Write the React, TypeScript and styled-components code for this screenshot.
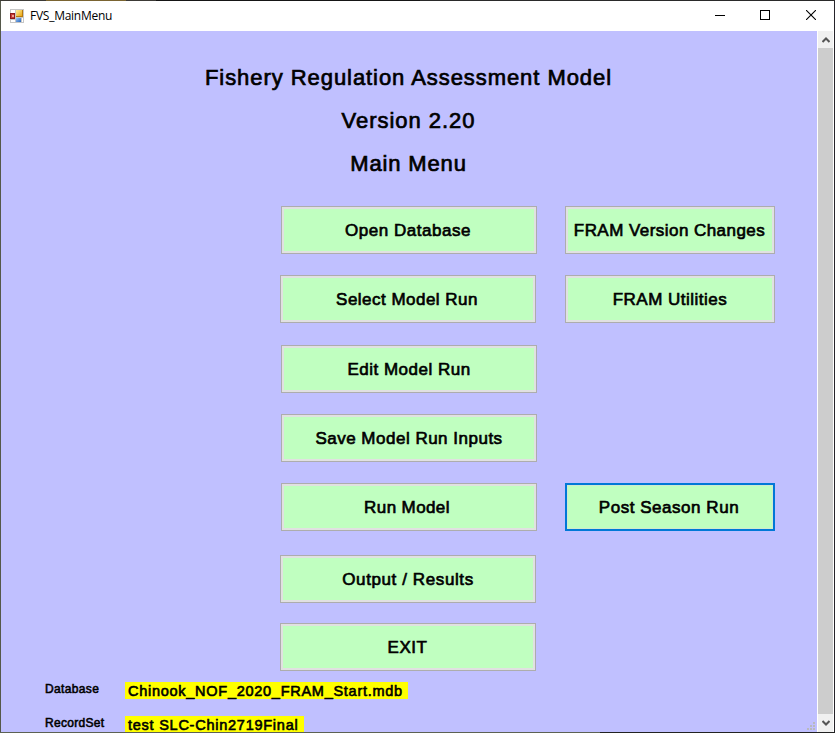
import React from 'react';
import styled, { createGlobalStyle } from 'styled-components';

const GlobalStyle = createGlobalStyle`
  * { box-sizing: border-box; }
  html, body { margin: 0; padding: 0; overflow: hidden; }
`;

const Frame = styled.div`
  width: 835px;
  height: 733px;
  padding: 1px;
  background:
    linear-gradient(90deg, #3c3a36 0 46px, #7a6431 46px 126px, #3c3a36 126px 156px, #151515 156px 420px, #2a2a2a 420px) top / 100% 1px no-repeat,
    linear-gradient(90deg, #5c6154 0 600px, #222 600px) bottom / 100% 1px no-repeat,
    linear-gradient(#55584a, #55584a) left / 1px 100% no-repeat,
    #25232a;
  display: flex;
  flex-direction: column;
  overflow: hidden;
  color: #000;
`;

const TitleBar = styled.header`
  height: 30px;
  flex: none;
  background: #fff;
  display: flex;
  align-items: center;
  padding-left: 9px;
`;

const Caption = styled.span`
  flex: 1;
  margin-left: 6px;
  font: 12px/16px 'Open Sans', 'Noto Sans', sans-serif;
  letter-spacing: -0.26px;
`;

const WindowButton = styled.button`
  width: 46px;
  height: 30px;
  border: 0;
  padding: 0 0 2px;
  background: none;
  display: grid;
  place-items: center;
`;

const MinimizeButton = styled(WindowButton)`
  padding-left: 2px;
`;

const Content = styled.div`
  flex: 1;
  min-height: 0;
  display: flex;
`;

const Form = styled.main`
  position: relative;
  width: 816px;
  background: #c0c0ff;
  font-family: 'Liberation Sans', Arial, sans-serif;
  overflow: hidden;
`;

const Heading = styled.h1<{ $spacing: number }>`
  margin: 0;
  height: 43px;
  padding-right: 1px;
  font-size: 22px;
  line-height: 43px;
  font-weight: 400;
  text-align: center;
  white-space: nowrap;
  -webkit-text-stroke: 0.7px #000;
  letter-spacing: ${p => p.$spacing}px;
`;

const Headings = styled.div`
  padding-top: 25px;
  height: 175px;
`;

const Menu = styled.div`
  display: flex;
  gap: 28px;
  padding-left: 279px;
  height: 465px;
`;

const Column = styled.div<{ $width: number }>`
  width: ${p => p.$width}px;
  display: flex;
  flex-direction: column;
`;

const MenuButton = styled.button<{ $gap: number; $indent?: number; $width: number; $spacing: number; $inset?: number; $focused?: boolean }>`
  flex: none;
  width: ${p => p.$width}px;
  height: 48px;
  margin: ${p => p.$gap}px 0 0 ${p => p.$indent ?? 0}px;
  padding: 2px ${p => p.$inset ?? 0}px 0 0;
  border: ${p => (p.$focused ? '2px solid #0078d7' : '1px solid #adadad')};
  background: #c0ffc0;
  box-shadow: inset 0 0 0 ${p => (p.$focused ? 1 : 2)}px ${p => (p.$focused ? '#d0ead0' : '#e1e1e1')};
  color: #000;
  font: 400 17px/20px 'Liberation Sans', Arial, sans-serif;
  letter-spacing: ${p => p.$spacing}px;
  -webkit-text-stroke: 0.65px #000;
  white-space: nowrap;
`;

const InfoRow = styled.div<{ $gap: number }>`
  display: flex;
  height: 18px;
  margin-top: ${p => p.$gap}px;
  padding-left: 44px;
`;

const InfoLabel = styled.span<{ $spacing: number }>`
  width: 80px;
  font-size: 12px;
  line-height: 14px;
  letter-spacing: ${p => p.$spacing}px;
  -webkit-text-stroke: 0.55px #000;
`;

const InfoValue = styled.span<{ $width: number; $spacing: number }>`
  width: ${p => p.$width}px;
  height: 17px;
  padding-left: 3px;
  background: #ff0;
  font-size: 14.5px;
  line-height: 19px;
  letter-spacing: ${p => p.$spacing}px;
  -webkit-text-stroke: 0.6px #000;
  white-space: nowrap;
`;

const Grip = styled.svg`
  position: absolute;
  right: 2px;
  bottom: 2px;
`;

const ScrollBar = styled.div`
  width: 17px;
  background: #f0f0f0;
  border-left: 1px solid #fff;
  border-right: 1px solid #fff;
  display: flex;
  flex-direction: column;
`;

const Arrow = styled.div`
  height: 17px;
  display: grid;
  place-items: center;
`;

const Thumb = styled.div`
  height: 666px;
  background: #cdcdcd;
`;

const AppIcon = () => (
  <svg width="14" height="14" viewBox="0 0 14 14" shapeRendering="crispEdges">
    <defs>
      <linearGradient id="gold" x2="1" y2="1"><stop stopColor="#fff0a0" /><stop offset="1" stopColor="#e9a512" /></linearGradient>
      <linearGradient id="blue" x2="1" y2="1"><stop stopColor="#9cc5f5" /><stop offset="1" stopColor="#2564bd" /></linearGradient>
    </defs>
    <path d="M0 0H14V14H0Z" fill="#c6c6c6" />
    <path d="M1 1H5V4H1ZM1 11H5V13H1ZM12 9H13V13H12Z" fill="#fff" />
    <path d="M0 4H5V10H0Z" fill="#8d1919" />
    <path d="M1 5H4V9H1Z" fill="#c63a36" />
    <path d="M2 6H4V8H2Z" fill="#f0a090" />
    <path d="M6 1H13V8H6Z" fill="#b87a0b" />
    <path d="M6 1H12V7H6Z" fill="url(#gold)" />
    <path d="M6 9H11V13H6Z" fill="url(#blue)" />
  </svg>
);

const left = [
  { text: 'Open Database', gap: 0, indent: 1, spacing: 0.55, inset: 2 },
  { text: 'Select Model Run', gap: 21, indent: 0, spacing: 0.48, inset: 2 },
  { text: 'Edit Model Run', gap: 22, indent: 1, spacing: 0.5 },
  { text: 'Save Model Run Inputs', gap: 21, indent: 1, spacing: 0.5 },
  { text: 'Run Model', gap: 21, indent: 1, spacing: 0.4, inset: 4 },
  { text: 'Output / Results', gap: 24, indent: 0, spacing: 0.6 },
  { text: 'EXIT', gap: 20, indent: 0, spacing: 0.5, inset: 1 },
];

const right = [
  { text: 'FRAM Version Changes', gap: 0, spacing: 0.45, inset: 1 },
  { text: 'FRAM Utilities', gap: 21, spacing: 0.5 },
  { text: 'Post Season Run', gap: 160, spacing: 0.53, inset: 2, focused: true },
];

export default function App() {
  return (
    <>
      <GlobalStyle />
      <Frame>
        <TitleBar>
          <AppIcon />
          <Caption>FVS_MainMenu</Caption>
          <MinimizeButton aria-label="Minimize">
            <svg width="10" height="10" shapeRendering="crispEdges"><path d="M0 5.5H10" stroke="#000" /></svg>
          </MinimizeButton>
          <WindowButton aria-label="Maximize">
            <svg width="10" height="10" shapeRendering="crispEdges"><path d="M.5 .5H9.5V9.5H.5Z" fill="none" stroke="#000" /></svg>
          </WindowButton>
          <WindowButton aria-label="Close">
            <svg width="10" height="10"><path d="M0 0L10 10M10 0L0 10" stroke="#000" strokeWidth="1.1" /></svg>
          </WindowButton>
        </TitleBar>
        <Content>
          <Form>
            <Headings>
              <Heading $spacing={0.94}>Fishery Regulation Assessment Model</Heading>
              <Heading $spacing={0.96}>Version 2.20</Heading>
              <Heading $spacing={0.85}>Main Menu</Heading>
            </Headings>
            <Menu>
              <Column $width={257}>
                {left.map(b => (
                  <MenuButton key={b.text} $width={256} $gap={b.gap} $indent={b.indent} $spacing={b.spacing} $inset={b.inset}>{b.text}</MenuButton>
                ))}
              </Column>
              <Column $width={210}>
                {right.map(b => (
                  <MenuButton key={b.text} $width={210} $gap={b.gap} $spacing={b.spacing} $inset={b.inset} $focused={b.focused}>{b.text}</MenuButton>
                ))}
              </Column>
            </Menu>
            <InfoRow $gap={11}>
              <InfoLabel $spacing={0.35}>Database</InfoLabel>
              <InfoValue $width={283} $spacing={0.73}>Chinook_NOF_2020_FRAM_Start.mdb</InfoValue>
            </InfoRow>
            <InfoRow $gap={16}>
              <InfoLabel $spacing={0.3}>RecordSet</InfoLabel>
              <InfoValue $width={179} $spacing={0.75}>test SLC-Chin2719Final</InfoValue>
            </InfoRow>
            <Grip width="8" height="8" shapeRendering="crispEdges">
              <path d="M6 0h2v2h-2zM3 3h2v2h-2zM6 3h2v2h-2zM0 6h2v2h-2zM3 6h2v2h-2zM6 6h2v2h-2z" fill="#b9b9bd" />
            </Grip>
          </Form>
          <ScrollBar>
            <Arrow>
              <svg width="8" height="6"><path d="M.5 5L4 1.5L7.5 5" fill="none" stroke="#555" strokeWidth="2" /></svg>
            </Arrow>
            <Thumb />
            <Arrow>
              <svg width="8" height="6"><path d="M.5 1L4 4.5L7.5 1" fill="none" stroke="#555" strokeWidth="2" /></svg>
            </Arrow>
          </ScrollBar>
        </Content>
      </Frame>
    </>
  );
}
